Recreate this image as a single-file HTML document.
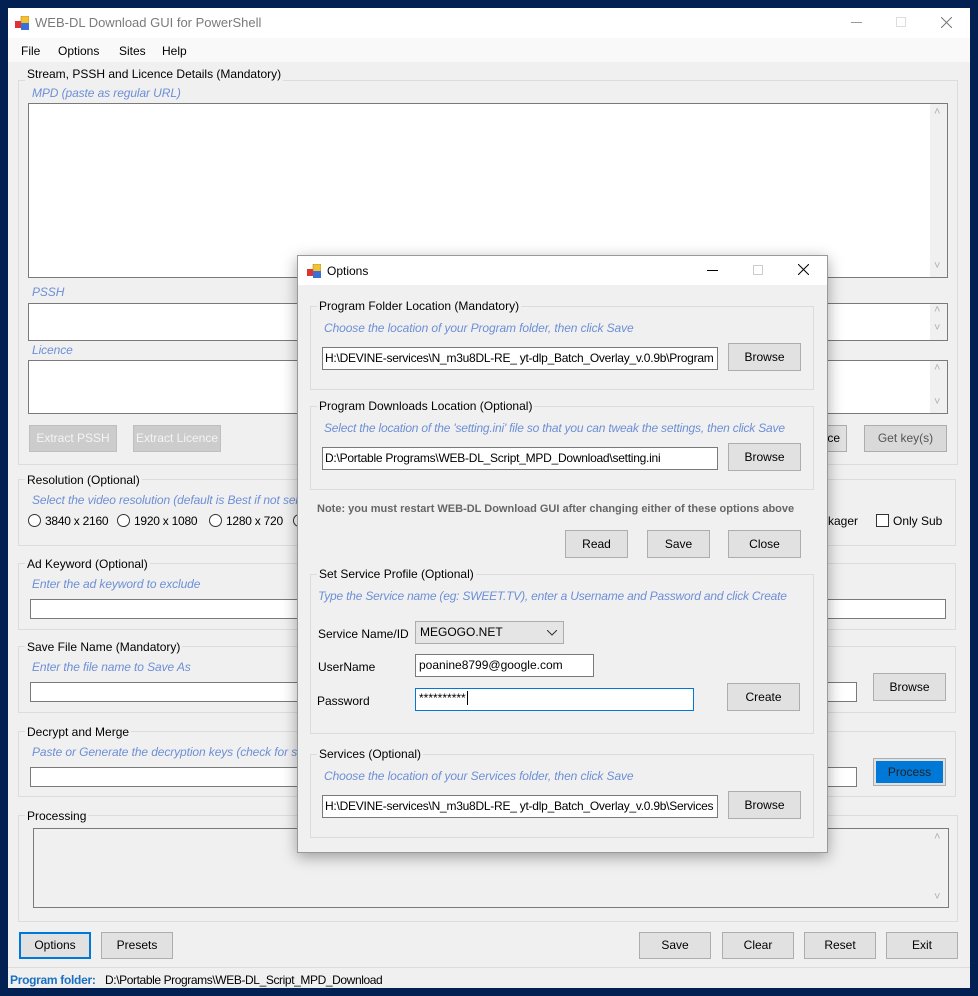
<!DOCTYPE html>
<html><head><meta charset="utf-8"><style>
*{box-sizing:border-box;margin:0;padding:0}
body{width:978px;height:996px;background:#022052;position:relative;overflow:hidden;font-family:"Liberation Sans",sans-serif;font-size:12px;color:#000}
.a{position:absolute}
.win{left:8px;top:8px;width:962px;height:980px;background:#f0f0f0}
.grp{position:absolute;border:1px solid #dcdcdc}
.gl{position:absolute;background:#f0f0f0;padding:0 2px;white-space:nowrap;font-size:12px;line-height:14px}
.hint{position:absolute;color:#6d8fd6;font-style:italic;white-space:nowrap;font-size:12px;letter-spacing:-0.1px;line-height:14px}
.tb{position:absolute;background:#fff;border:1px solid #7a7a7a}
.btn{position:absolute;background:#e1e1e1;border:1px solid #adadad;text-align:center;font-size:12px;white-space:nowrap}
.dis{background:#cccccc;border-color:#bfbfbf;color:#f4f4f4}
.t{position:absolute;white-space:nowrap;line-height:14px}
.sb{position:absolute;color:#b0b0b0;font-size:11px}
.rad{display:inline-block;width:13px;height:13px;border:1px solid #333;border-radius:50%;background:#fff;vertical-align:-2px;margin-right:4px}
.sm{font-size:12px;letter-spacing:-0.25px}
</style></head><body>
<div class="a win"></div>
<div class="a" style="left:8px;top:8px;width:962px;height:30px;background:#fff"></div>
<svg class="a" style="left:15px;top:16px" width="14" height="14"><rect x="0" y="5" width="7" height="7" fill="#d33"/><rect x="6" y="0" width="8" height="8" fill="#f2c230" stroke="#a07a10" stroke-width=".5"/><rect x="6" y="7" width="8" height="7" fill="#3a6fd8"/></svg>
<div class="t" style="left:35px;top:16px;color:#7a7a7a;font-size:13px">WEB-DL Download GUI for PowerShell</div>
<div class="a" style="left:851px;top:22px;width:11px;height:1px;background:#999"></div>
<div class="a" style="left:896px;top:17px;width:10px;height:10px;border:1px solid #ddd"></div>
<svg class="a" style="left:941px;top:17px" width="11" height="11"><path d="M0 0L11 11M11 0L0 11" stroke="#777" stroke-width="1"/></svg>
<div class="a" style="left:8px;top:38px;width:962px;height:24px;background:#f9f9f9"></div>
<div class="t" style="left:21px;top:44px">File</div>
<div class="t" style="left:58px;top:44px">Options</div>
<div class="t" style="left:119px;top:44px">Sites</div>
<div class="t" style="left:162px;top:44px">Help</div>

<div class="grp" style="left:18px;top:80px;width:940px;height:385px"></div>
<div class="gl" style="left:25px;top:67px">Stream, PSSH and Licence Details (Mandatory)</div>
<div class="hint" style="left:32px;top:86px">MPD (paste as regular URL)</div>
<div class="tb" style="left:28px;top:103px;width:920px;height:175px"></div>
<div class="a" style="left:930px;top:104px;width:17px;height:173px;background:#f0f0f0"></div>
<div class="sb" style="left:934px;top:106px">˄</div><div class="sb" style="left:934px;top:260px">˅</div>
<div class="hint" style="left:32px;top:285px">PSSH</div>
<div class="tb" style="left:28px;top:303px;width:920px;height:38px"></div>
<div class="a" style="left:930px;top:304px;width:17px;height:36px;background:#f0f0f0"></div>
<div class="sb" style="left:934px;top:304px">˄</div><div class="sb" style="left:934px;top:322px">˅</div>
<div class="hint" style="left:32px;top:343px">Licence</div>
<div class="tb" style="left:28px;top:360px;width:920px;height:54px"></div>
<div class="a" style="left:930px;top:361px;width:17px;height:52px;background:#f0f0f0"></div>
<div class="sb" style="left:934px;top:362px">˄</div><div class="sb" style="left:934px;top:396px">˅</div>
<div class="btn dis" style="left:29px;top:425px;width:88px;height:27px;line-height:25px">Extract PSSH</div>
<div class="btn dis" style="left:133px;top:425px;width:88px;height:27px;line-height:25px">Extract Licence</div>
<div class="btn" style="left:780px;top:425px;width:67px;height:27px;line-height:25px;text-align:right;padding-right:6px">ce</div>
<div class="btn" style="left:864px;top:425px;width:83px;height:27px;line-height:25px;background:#d9d9d9;color:#555">Get key(s)</div>

<div class="grp" style="left:18px;top:479px;width:938px;height:67px"></div>
<div class="gl" style="left:25px;top:473px">Resolution (Optional)</div>
<div class="hint" style="left:32px;top:493px">Select the video resolution (default is Best if not selected)</div>
<div class="t sm" style="left:28px;top:514px"><span class="rad"></span>3840 x 2160</div>
<div class="t sm" style="left:117px;top:514px"><span class="rad"></span>1920 x 1080</div>
<div class="t sm" style="left:209px;top:514px"><span class="rad"></span>1280 x 720</div>
<div class="t" style="left:293px;top:514px"><span class="rad"></span></div>
<div class="t" style="left:822px;top:514px">ckager</div>
<div class="t" style="left:876px;top:514px"><span style="display:inline-block;width:13px;height:13px;border:1px solid #333;background:#fff;vertical-align:-2px;margin-right:4px"></span>Only Sub</div>

<div class="grp" style="left:18px;top:563px;width:938px;height:67px"></div>
<div class="gl" style="left:25px;top:557px">Ad Keyword (Optional)</div>
<div class="hint" style="left:32px;top:577px">Enter the ad keyword to exclude</div>
<div class="tb" style="left:30px;top:599px;width:916px;height:20px"></div>

<div class="grp" style="left:18px;top:646px;width:938px;height:67px"></div>
<div class="gl" style="left:25px;top:640px">Save File Name (Mandatory)</div>
<div class="hint" style="left:32px;top:660px">Enter the file name to Save As</div>
<div class="tb" style="left:30px;top:682px;width:827px;height:20px"></div>
<div class="btn" style="left:873px;top:673px;width:73px;height:28px;line-height:26px">Browse</div>

<div class="grp" style="left:18px;top:731px;width:938px;height:66px"></div>
<div class="gl" style="left:25px;top:725px">Decrypt and Merge</div>
<div class="hint" style="left:32px;top:745px">Paste or Generate the decryption keys (check for spaces)</div>
<div class="tb" style="left:30px;top:767px;width:827px;height:20px"></div>
<div class="btn" style="left:873px;top:758px;width:73px;height:28px;padding:2px"><div style="background:#0078d7;height:22px;line-height:22px;color:#222">Process</div></div>

<div class="grp" style="left:18px;top:815px;width:940px;height:107px"></div>
<div class="gl" style="left:25px;top:809px">Processing</div>
<div class="tb" style="left:33px;top:828px;width:916px;height:80px;background:#f0f0f0"></div>
<div class="sb" style="left:934px;top:831px">˄</div><div class="sb" style="left:934px;top:891px">˅</div>

<div class="btn" style="left:19px;top:932px;width:72px;height:27px;border:2px solid #0078d7;line-height:23px">Options</div>
<div class="btn" style="left:101px;top:932px;width:72px;height:27px;line-height:25px">Presets</div>
<div class="btn" style="left:639px;top:932px;width:72px;height:27px;line-height:25px">Save</div>
<div class="btn" style="left:722px;top:932px;width:72px;height:27px;line-height:25px">Clear</div>
<div class="btn" style="left:804px;top:932px;width:72px;height:27px;line-height:25px">Reset</div>
<div class="btn" style="left:886px;top:932px;width:72px;height:27px;line-height:25px">Exit</div>
<div class="a" style="left:8px;top:967px;width:962px;height:1px;background:#dcdcdc"></div>
<div class="t" style="left:10px;top:973px;color:#1a6fc2;font-weight:bold;font-size:12px;letter-spacing:-0.3px">Program folder:</div>
<div class="t" style="left:105px;top:973px;font-size:12px;letter-spacing:-0.4px">D:\Portable Programs\WEB-DL_Script_MPD_Download</div>

<div class="a" style="left:297px;top:255px;width:531px;height:598px;background:#f0f0f0;border:1px solid #999;box-shadow:0 4px 14px rgba(0,0,0,.35)"></div>
<div class="a" style="left:298px;top:256px;width:529px;height:29px;background:#fff"></div>
<svg class="a" style="left:307px;top:264px" width="14" height="14"><rect x="0" y="5" width="7" height="7" fill="#d33"/><rect x="6" y="0" width="8" height="8" fill="#f2c230" stroke="#a07a10" stroke-width=".5"/><rect x="6" y="7" width="8" height="7" fill="#3a6fd8"/></svg>
<div class="t" style="left:327px;top:264px">Options</div>
<div class="a" style="left:707px;top:270px;width:11px;height:1px;background:#000"></div>
<div class="a" style="left:753px;top:265px;width:10px;height:10px;border:1px solid #ccc"></div>
<svg class="a" style="left:798px;top:264px" width="11" height="11"><path d="M0 0L11 11M11 0L0 11" stroke="#000" stroke-width="1"/></svg>

<div class="grp" style="left:310px;top:306px;width:504px;height:84px"></div>
<div class="gl" style="left:317px;top:299px">Program Folder Location (Mandatory)</div>
<div class="hint" style="left:324px;top:321px">Choose the location of your Program folder, then click Save</div>
<div class="tb sm" style="left:322px;top:347px;width:396px;height:23px;line-height:20px;padding-left:2px;overflow:hidden;white-space:nowrap">H:\DEVINE-services\N_m3u8DL-RE_ yt-dlp_Batch_Overlay_v.0.9b\Program</div>
<div class="btn" style="left:728px;top:343px;width:73px;height:28px;line-height:26px">Browse</div>

<div class="grp" style="left:310px;top:406px;width:504px;height:84px"></div>
<div class="gl" style="left:317px;top:399px">Program Downloads Location (Optional)</div>
<div class="hint" style="left:324px;top:421px;letter-spacing:-0.2px">Select the location of the 'setting.ini' file so that you can tweak the settings, then click Save</div>
<div class="tb sm" style="left:322px;top:447px;width:396px;height:23px;line-height:20px;padding-left:2px;white-space:nowrap">D:\Portable Programs\WEB-DL_Script_MPD_Download\setting.ini</div>
<div class="btn" style="left:728px;top:443px;width:73px;height:28px;line-height:26px">Browse</div>

<div class="t" style="left:317px;top:502px;color:#666;font-weight:bold;font-size:11px">Note: you must restart WEB-DL Download GUI after changing either of these options above</div>
<div class="btn" style="left:565px;top:530px;width:63px;height:28px;line-height:26px">Read</div>
<div class="btn" style="left:647px;top:530px;width:63px;height:28px;line-height:26px">Save</div>
<div class="btn" style="left:728px;top:530px;width:73px;height:28px;line-height:26px">Close</div>

<div class="grp" style="left:310px;top:574px;width:504px;height:160px"></div>
<div class="gl" style="left:317px;top:567px">Set Service Profile (Optional)</div>
<div class="hint" style="left:318px;top:589px;letter-spacing:-0.2px">Type the Service name (eg: SWEET.TV), enter a Username and Password and click Create</div>
<div class="t" style="left:318px;top:627px">Service Name/ID</div>
<div class="a" style="left:415px;top:621px;width:149px;height:23px;background:#e5e5e5;border:1px solid #adadad;padding:3px 4px">MEGOGO.NET<svg style="position:absolute;right:6px;top:8px" width="10" height="6"><path d="M0 0L5 5L10 0" stroke="#333" fill="none"/></svg></div>
<div class="t" style="left:318px;top:660px">UserName</div>
<div class="tb" style="left:415px;top:654px;width:179px;height:23px;line-height:20px;padding-left:3px">poanine8799@google.com</div>
<div class="t" style="left:317px;top:694px">Password</div>
<div class="tb" style="left:415px;top:688px;width:279px;height:23px;line-height:18px;padding-left:3px;border-color:#0078d7">**********<span style="border-left:1px solid #000;margin-left:1px"></span></div>
<div class="btn" style="left:727px;top:683px;width:73px;height:28px;line-height:26px">Create</div>

<div class="grp" style="left:310px;top:754px;width:504px;height:84px"></div>
<div class="gl" style="left:317px;top:747px">Services (Optional)</div>
<div class="hint" style="left:324px;top:769px">Choose the location of your Services folder, then click Save</div>
<div class="tb sm" style="left:322px;top:795px;width:396px;height:23px;line-height:20px;padding-left:2px;overflow:hidden;white-space:nowrap">H:\DEVINE-services\N_m3u8DL-RE_ yt-dlp_Batch_Overlay_v.0.9b\Services</div>
<div class="btn" style="left:728px;top:791px;width:73px;height:28px;line-height:26px">Browse</div>
</body></html>
